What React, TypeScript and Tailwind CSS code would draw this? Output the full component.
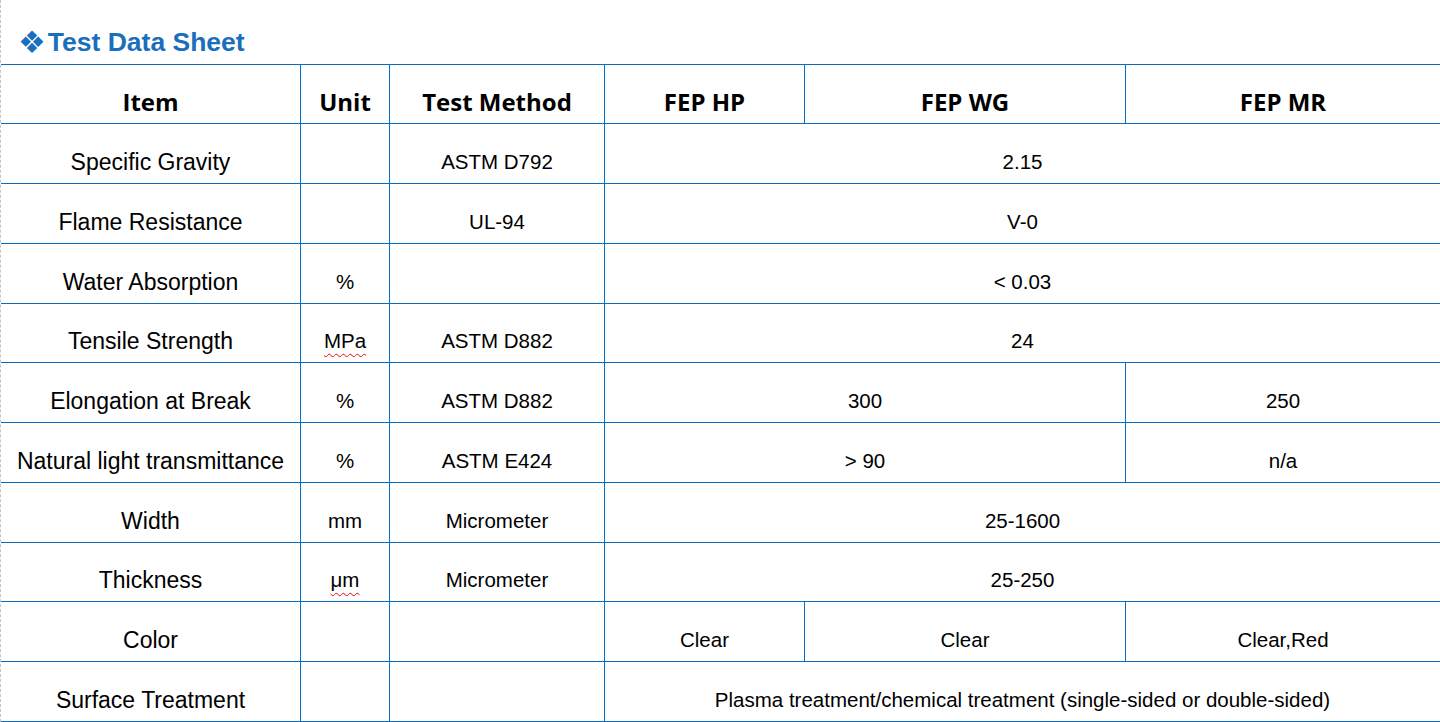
import type { ReactNode } from 'react';

type Cell = { text: ReactNode; span?: 2 | 3 };

type Row = {
  item: string;
  unit?: ReactNode;
  method?: string;
  values: Cell[];
};

const spell = 'underline decoration-wavy decoration-[#e01010] decoration-1 underline-offset-[5px]';

const rows: Row[] = [
  { item: 'Specific Gravity', method: 'ASTM D792', values: [{ text: '2.15', span: 3 }] },
  { item: 'Flame Resistance', method: 'UL-94', values: [{ text: 'V-0', span: 3 }] },
  { item: 'Water Absorption', unit: '%', values: [{ text: '< 0.03', span: 3 }] },
  {
    item: 'Tensile Strength',
    unit: <span className={spell}>MPa</span>,
    method: 'ASTM D882',
    values: [{ text: '24', span: 3 }],
  },
  {
    item: 'Elongation at Break',
    unit: '%',
    method: 'ASTM D882',
    values: [{ text: '300', span: 2 }, { text: '250' }],
  },
  {
    item: 'Natural light transmittance',
    unit: '%',
    method: 'ASTM E424',
    values: [{ text: '> 90', span: 2 }, { text: 'n/a' }],
  },
  { item: 'Width', unit: 'mm', method: 'Micrometer', values: [{ text: '25-1600', span: 3 }] },
  {
    item: 'Thickness',
    unit: <span className={spell}>μm</span>,
    method: 'Micrometer',
    values: [{ text: '25-250', span: 3 }],
  },
  { item: 'Color', values: [{ text: 'Clear' }, { text: 'Clear' }, { text: 'Clear,Red' }] },
  {
    item: 'Surface Treatment',
    values: [{ text: 'Plasma treatment/chemical treatment (single-sided or double-sided)', span: 3 }],
  },
];

const headers = ['Item', 'Unit', 'Test Method', 'FEP HP', 'FEP WG', 'FEP MR'];

const cell = 'flex items-end justify-center bg-white leading-none text-black';
const body = `${cell} pb-[11px] text-[20.5px] font-['Liberation_Sans',Arial,sans-serif]`;

export default function App() {
  return (
    <div className="h-[722px] w-[1440px] overflow-hidden border-l border-dashed border-[#c4c4c4] bg-white">
      {/* Title */}
      <div className="flex h-[64px] items-end pb-[9px] text-[#1a6fbd]">
        <span className="-mb-[3px] ml-[17px] text-[31px] leading-none font-['DejaVu_Sans',sans-serif]">❖</span>
        <span className="ml-[2px] text-[26.5px] font-bold leading-none font-['Liberation_Sans',Arial,sans-serif]">
          Test Data Sheet
        </span>
      </div>

      {/* Sheet */}
      <div className="grid grid-cols-[299px_88px_214px_199px_320px_314px] grid-rows-[58px_59px_59px_59px_58px_59px_59px_59px_58px_59px_59px] gap-px bg-[#0a6cc0] py-px">
        {headers.map((h) => (
          <div
            key={h}
            className={`${cell} pb-[9px] text-[24px] font-bold font-['Open_Sans',sans-serif]`}
          >
            {h}
          </div>
        ))}

        {rows.map((r) => (
          <div key={r.item} className="contents">
            <div className={`${cell} pb-[9px] text-[23px] font-['Liberation_Sans',Arial,sans-serif]`}>
              {r.item}
            </div>
            <div className={body}>{r.unit}</div>
            <div className={body}>{r.method}</div>
            {r.values.map((v, i) => (
              <div
                key={i}
                className={`${body} ${v.span === 3 ? 'col-span-3' : v.span === 2 ? 'col-span-2' : ''}`}
              >
                {v.text}
              </div>
            ))}
          </div>
        ))}
      </div>
    </div>
  );
}
